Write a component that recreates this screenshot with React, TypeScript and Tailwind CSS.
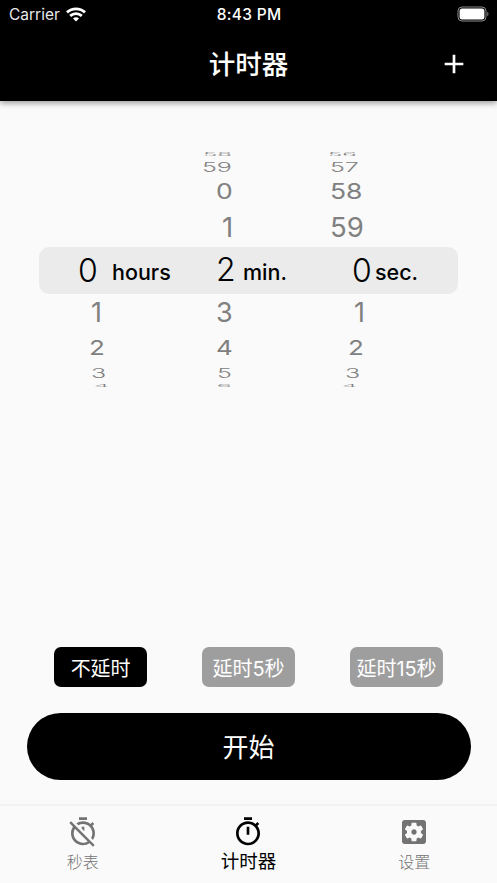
import React, { useState } from 'react';
import { MdAdd } from 'react-icons/md';

const TIMER_PATH =
  'M15 1H9v2h6V1zm-4 13h2V8h-2v6zm8.03-6.61l1.42-1.42c-.43-.51-.9-.99-1.41-1.41l-1.42 1.42C16.07 4.74 14.12 4 12 4c-4.97 0-9 4.03-9 9s4.02 9 9 9 9-4.03 9-9c0-2.12-.74-4.07-1.97-5.61zM12 20c-3.87 0-7-3.13-7-7s3.13-7 7-7 7 3.13 7 7-3.13 7-7 7z';
const TIMER_OFF_PATH =
  'M19.04 4.55l-1.42 1.42C16.07 4.74 14.12 4 12 4c-1.83 0-3.53.55-4.95 1.48l1.46 1.46C9.53 6.35 10.73 6 12 6c3.87 0 7 3.13 7 7 0 1.27-.35 2.47-.94 3.49l1.45 1.45C20.45 16.53 21 14.83 21 13c0-2.12-.74-4.07-1.97-5.61l1.42-1.42-1.41-1.42zM15 1H9v2h6V1zm-4 8.44l2 2V8h-2v1.44zM3.02 4L1.75 5.27 4.5 8.03C3.55 9.45 3 11.16 3 13c0 4.97 4.02 9 9 9 1.84 0 3.55-.55 4.98-1.5l2.5 2.5 1.27-1.27-7.71-7.71L3.02 4zM12 20c-3.87 0-7-3.13-7-7 0-1.28.35-2.48.95-3.52l9.56 9.56c-1.03.61-2.23.96-3.51.96z';
const SETTINGS_PATH =
  'M12 10c-1.1 0-2 .9-2 2s.9 2 2 2 2-.9 2-2-.9-2-2-2zm7-7H5c-1.11 0-2 .9-2 2v14c0 1.1.89 2 2 2h14c1.11 0 2-.9 2-2V5c0-1.1-.89-2-2-2zm-1.75 9c0 .23-.02.46-.05.68l1.48 1.16c.13.11.17.3.08.45l-1.4 2.42c-.09.15-.27.21-.43.15l-1.74-.7c-.36.28-.76.51-1.18.69l-.26 1.85c-.03.17-.18.3-.35.3h-2.8c-.17 0-.32-.13-.35-.29l-.26-1.85c-.43-.18-.82-.41-1.18-.69l-1.74.7c-.16.06-.34 0-.43-.15l-1.4-2.42c-.09-.15-.05-.34.08-.45l1.48-1.16c-.03-.23-.05-.46-.05-.69s.02-.46.05-.68l-1.48-1.16c-.13-.11-.17-.3-.08-.45l1.4-2.42c.09-.15.27-.21.43-.15l1.74.7c.36-.28.76-.51 1.18-.69l.26-1.85c.03-.17.18-.3.35-.3h2.8c.17 0 .32.13.35.29l.26 1.85c.43.18.82.41 1.18.69l1.74-.7c.16-.06.34 0 .43.15l1.4 2.42c.09.15.05.34-.08.45l-1.48 1.16c.03.23.05.46.05.69z';

type WheelRow = { row: string; text: string; cells: (string[] | null)[] };

// Rows flatten and shrink the further they are from the selected one
const above: WheelRow[] = [
  { row: 'h-2', text: 'text-[24px] font-light scale-y-[0.18]', cells: [null, ['58', 'pl-[23px]'], ['56', 'pl-[18px]']] },
  { row: 'h-4', text: 'text-[25px] font-light scale-y-[0.54]', cells: [null, ['59', 'pl-[22px]'], ['57', 'pl-[20px]']] },
  { row: 'h-[33px]', text: 'text-[26.500px] scale-y-[0.79]', cells: [null, ['0', 'pl-[36px]'], ['58', 'pl-[20px]']] },
  { row: 'h-[39px]', text: 'text-[27.500px]', cells: [null, ['1', 'pl-[42px]'], ['59', 'pl-[20px]']] },
];

const below: WheelRow[] = [
  { row: 'h-9', text: 'text-[27px]', cells: [['1', 'pl-[52px]'], ['3', 'pl-[36px]'], ['1', 'pl-[44px]']] },
  { row: 'h-9', text: 'text-[26px] scale-y-[0.79]', cells: [['2', 'pl-[50px]'], ['4', 'pl-[36px]'], ['2', 'pl-[38px]']] },
  { row: 'h-[15px]', text: 'text-[25px] font-light scale-y-[0.52]', cells: [['3', 'pl-[52px]'], ['5', 'pl-[37px]'], ['3', 'pl-[35px]']] },
  { row: 'h-[9px]', text: 'text-[24px] font-light scale-y-[0.16]', cells: [['4', 'pl-[55px]'], ['6', 'pl-[37px]'], ['4', 'pl-[32px]']] },
];

const WheelRows = ({ rows }: { rows: WheelRow[] }) => (
  <>
    {rows.map((r, i) => (
      <div key={i} className={`grid grid-cols-[141px_130px_148px] items-center text-[#808080] ${r.row}`}>
        {r.cells.map((c, j) => (
          <div key={j} className={`flex h-0 items-center ${c ? c[1] : ''}`}>
            {c && <span className={`leading-none ${r.text}`}>{c[0]}</span>}
          </div>
        ))}
      </div>
    ))}
  </>
);

const delays = ['不延时', '延时5秒', '延时15秒'];

const tabs = [
  { label: '秒表', path: TIMER_OFF_PATH },
  { label: '计时器', path: TIMER_PATH },
  { label: '设置', path: SETTINGS_PATH },
];

const App = () => {
  const [delay, setDelay] = useState(0);
  const [tab, setTab] = useState(1);

  return (
    <div className="flex h-[883px] w-[497px] flex-col overflow-hidden bg-[#fafafa] font-['Inter','Noto_Sans_CJK_SC',sans-serif]">
      {/* Status bar and title */}
      <header className="h-[101px] shrink-0 bg-black text-white shadow-[0_2px_6px_rgba(0,0,0,0.4)]">
        <div className="grid h-7 grid-cols-3 items-center pl-[9px] pr-2">
          <div className="flex items-center gap-[6px]">
            <span className="pt-px text-[15.500px] text-[#e8e8e8]">Carrier</span>
            <svg width="20" height="15" viewBox="0 0 20 15" fill="none" stroke="currentColor" strokeWidth="2.9">
              <path d="M1 5.400C6 .7 14 .7 19 5.400" />
              <path d="M4.200 8.900c3.300-3 8.300-3 11.600 0" />
              <path d="M10 14.600l-3-3.200c1.700-1.500 4.300-1.500 6 0z" fill="currentColor" stroke="none" />
            </svg>
          </div>
          <span className="pt-px text-center text-[15.500px] font-medium tracking-[0.3px]">8:43 PM</span>
          <svg className="justify-self-end" width="32" height="16" viewBox="0 0 32 16">
            <rect x="1" y="1" width="28" height="14" rx="4" fill="none" stroke="#8a8a8a" />
            <rect x="2.600" y="2.600" width="24.800" height="10.800" rx="2.500" fill="#fff" />
            <path d="M30.300 5.700c1.600.8 1.600 3.700 0 4.500z" fill="#8a8a8a" />
          </svg>
        </div>
        <div className="grid h-[72px] grid-cols-[1fr_auto_1fr] items-center px-[27px]">
          <span />
          <h1 className="pt-[2px] text-[26.500px] font-medium whitespace-nowrap">计时器</h1>
          <button className="justify-self-end">
            <MdAdd size={32} />
          </button>
        </div>
      </header>

      {/* Wheel picker */}
      <section className="mx-[39px] mt-[50px] flex flex-col">
        <WheelRows rows={above} />
        <div className="grid h-[47px] grid-cols-[141px_130px_148px] items-center rounded-[10px] bg-[#ebebeb] text-black">
          <div className="flex items-baseline pl-[39px]">
            <span className="w-[34px] text-[32px] leading-none font-light">0</span>
            <span className="-translate-y-[2.500px] text-[21.500px] leading-none font-medium">hours</span>
          </div>
          <div className="flex items-baseline pl-[36px]">
            <span className="w-[27px] -translate-y-px text-[32px] leading-none font-light">2</span>
            <span className="-translate-y-[2.500px] text-[21.500px] leading-none font-medium">min.</span>
          </div>
          <div className="flex items-baseline pl-[42px]">
            <span className="w-[23px] text-[32px] leading-none font-light">0</span>
            <span className="-translate-y-[2.500px] text-[21.500px] leading-none font-medium">sec.</span>
          </div>
        </div>
        <WheelRows rows={below} />
      </section>

      {/* Delay options */}
      <div className="mt-auto mb-[26px] flex justify-between px-[54px]">
        {delays.map((d, i) => (
          <button
            key={d}
            onClick={() => setDelay(i)}
            className={`h-10 w-[93px] rounded-[7px] pt-[3px] text-xl tracking-[-0.1px] whitespace-nowrap text-white ${i === delay ? 'bg-black' : 'bg-[#9e9e9e]'}`}
          >
            {d}
          </button>
        ))}
      </div>

      <button className="mx-[26.500px] mb-6 h-[67px] shrink-0 rounded-full bg-black pt-[2px] text-[26px] text-white">
        开始
      </button>

      {/* Tab bar */}
      <nav className="grid h-[79px] shrink-0 grid-cols-3 border-t-2 border-[#f3f3f3]">
        {tabs.map((t, i) => (
          <button
            key={t.label}
            onClick={() => setTab(i)}
            className={`flex flex-col items-center pt-[10px] ${i === tab ? 'text-black' : 'text-[#737373]'}`}
          >
            <svg width="32" height="32" viewBox="0 0 24 24" fill="currentColor" className="shrink-0">
              <path d={t.path} />
            </svg>
            <span className={i === tab ? 'text-[18.500px] leading-[26px]' : 'text-base leading-[29px] font-light'}>{t.label}</span>
          </button>
        ))}
      </nav>
    </div>
  );
};

export default App;
